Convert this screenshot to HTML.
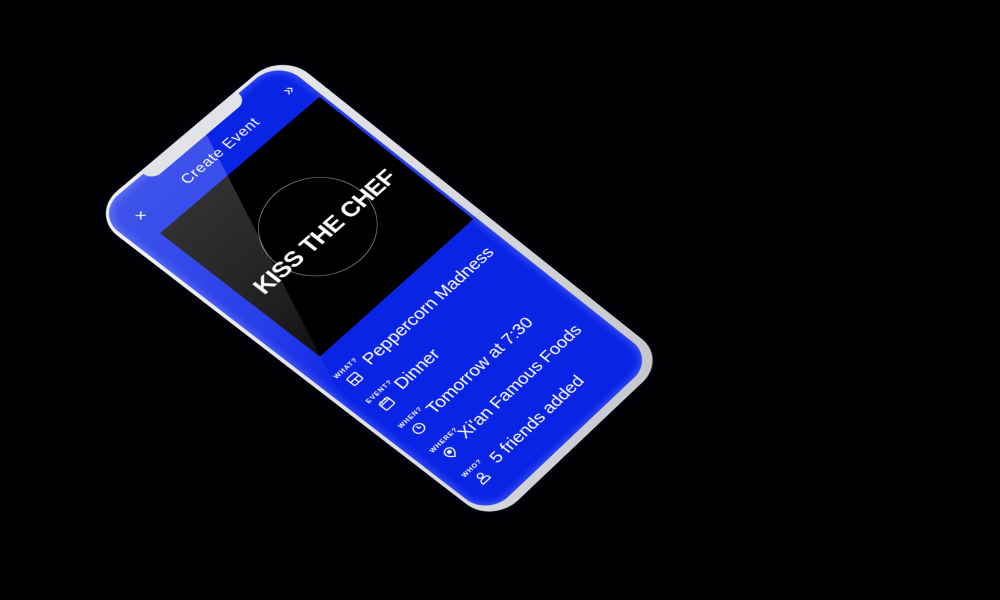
<!DOCTYPE html>
<html><head><meta charset="utf-8"><style>
html,body{margin:0;padding:0;background:#000;width:1000px;height:600px;overflow:hidden}
#phone{position:absolute;left:0;top:0;width:375px;height:812px;transform-origin:0 0;
transform:matrix3d(0.50757,-0.40613,0,0.00007579,0.50433,0.39417,0,0.00004313,0,0,1,0,95.5,214,0,1);
font-family:"Liberation Sans",sans-serif;color:#fff}
.frame{position:absolute;left:-6px;top:-6px;right:-14px;bottom:-16px;border-radius:56px;
background:linear-gradient(135deg,#f4f4f7 0%,#d9dade 60%,#c4c5cb 100%);
box-shadow:0 0 24px 2px rgba(20,30,120,.2)}
.screen{position:absolute;left:0;top:0;width:375px;height:812px;border-radius:46px;background:#0a24e6;overflow:hidden;
box-shadow:inset 0 0 14px 3px rgba(110,130,255,.55)}
.notch{position:absolute;left:96px;top:-6px;width:196px;height:24px;background:#e2e3e7;border-radius:0 0 18px 18px}
.black{position:absolute;left:38px;top:92px;width:332px;height:328px;background:#000}
.circle{position:absolute;left:113px;top:166px;width:178px;height:178px;border:1.5px solid #bdbdbd;border-radius:50%;box-sizing:border-box}
.kiss{position:absolute;left:0;width:406px;top:248px;text-align:center;font-weight:bold;font-size:39px;letter-spacing:-1px;white-space:nowrap}
.glare{position:absolute;left:0;top:0;width:375px;height:520px;clip-path:polygon(0 0,215px 0,0 513px);
background:linear-gradient(180deg,rgba(255,255,255,.22),rgba(255,255,255,.12) 60%,rgba(255,255,255,0))}
.title{position:absolute;left:0;width:402px;top:40px;text-align:center;font-size:24px;letter-spacing:1px}
.x{position:absolute;left:34px;top:34px;font-size:26px;font-weight:300}
.arr{position:absolute;left:340px;top:34px;font-size:26px}
.row{position:absolute;left:0;width:375px;height:60px}
.lab{position:absolute;left:26px;top:0;font-size:11px;font-weight:bold;letter-spacing:1.3px}
.ic{position:absolute;left:32px;top:17px;width:24px;height:24px}
.val{position:absolute;left:76px;top:3px;font-size:29px;letter-spacing:-0.2px;white-space:nowrap;line-height:36px}
</style></head><body>
<div id="phone">
  <div class="frame"></div>
  <div class="screen">
    <div class="black"></div>
    <div class="circle"></div>
    <div class="kiss">KISS THE CHEF</div>
    <div class="glare"></div>
    <div class="x">×</div>
    <div class="title">Create Event</div>
    <div class="arr">»</div>

    <div class="row" style="top:458px">
      <div class="lab">WHAT?</div>
      <svg class="ic" viewBox="0 0 22 22" fill="none" stroke="#fff" stroke-width="2"><rect x="3" y="3" width="16" height="16" rx="2"/><path d="M3 11h16M11 11v8"/></svg>
      <div class="val">Peppercorn Madness</div>
    </div>
    <div class="row" style="top:525px">
      <div class="lab">EVENT?</div>
      <svg class="ic" viewBox="0 0 22 22" fill="none" stroke="#fff" stroke-width="2"><rect x="3" y="4" width="16" height="15" rx="2"/><path d="M3 8h16M7 2v4M15 2v4"/></svg>
      <div class="val">Dinner</div>
    </div>
    <div class="row" style="top:593px">
      <div class="lab">WHEN?</div>
      <svg class="ic" viewBox="0 0 22 22" fill="none" stroke="#fff" stroke-width="2"><circle cx="11" cy="11" r="8"/><path d="M11 6v5h4"/></svg>
      <div class="val">Tomorrow at 7:30</div>
    </div>
    <div class="row" style="top:660px">
      <div class="lab">WHERE?</div>
      <svg class="ic" viewBox="0 0 22 22" fill="none" stroke="#fff" stroke-width="2"><path d="M11 20s7-6 7-11a7 7 0 0 0-14 0c0 5 7 11 7 11z"/><circle cx="11" cy="9" r="2.2" fill="#fff"/></svg>
      <div class="val">Xi'an Famous Foods</div>
    </div>
    <div class="row" style="top:728px">
      <div class="lab">WHO?</div>
      <svg class="ic" viewBox="0 0 22 22" fill="none" stroke="#fff" stroke-width="2"><circle cx="11" cy="7" r="4"/><path d="M4 20v-3a4 4 0 0 1 4-4h6a4 4 0 0 1 4 4v3z"/></svg>
      <div class="val">5 friends added</div>
    </div>
  </div>
  <div class="notch"></div>
</div>
</body></html>
